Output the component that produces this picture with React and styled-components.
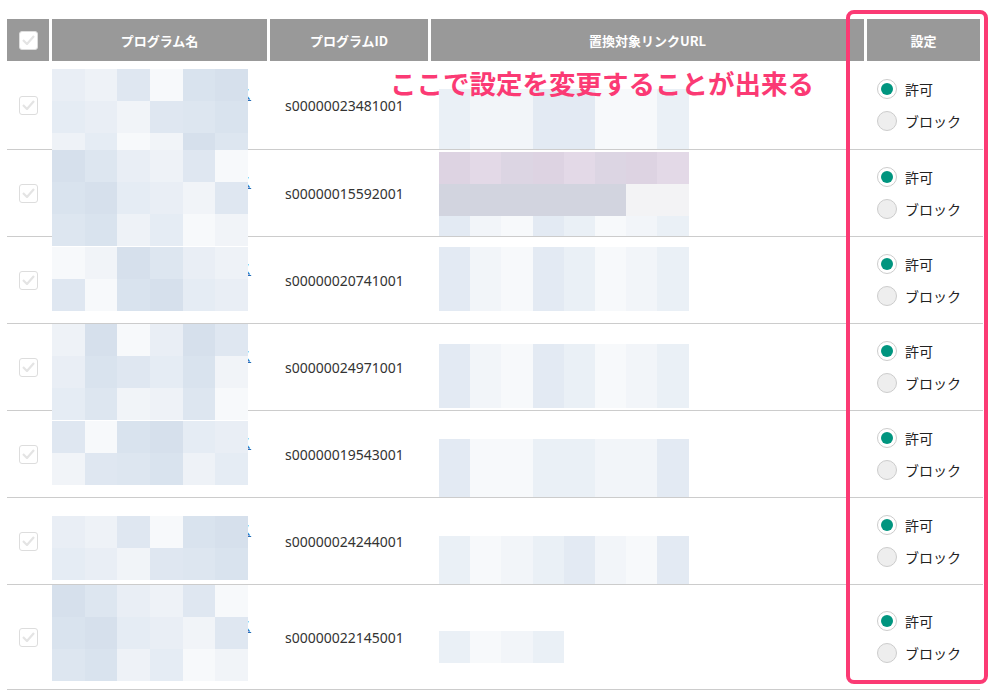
import React from "react";
import styled, { createGlobalStyle } from "styled-components";

const Global = createGlobalStyle`
  body { margin: 0; background: #fff; font-family: "Noto Sans CJK JP", "Noto Sans", sans-serif; }
`;

const Page = styled.div`
  position: relative;
  padding: 19px 0 0 7px;
  width: 1004px;
  height: 693px;
  box-sizing: border-box;
  overflow: hidden;
`;

const Grid = styled.div`
  display: grid;
  grid-template-columns: 42px 215px 158px 433px 113px;
  column-gap: 3px;
  width: 973px;
`;

const Head = styled.div`
  background: #999;
  height: 42px;
  display: flex;
  align-items: center;
  justify-content: center;
  color: #fff;
  font-weight: 700;
  font-size: 13px;
`;

const Cell = styled.div`
  position: relative;
  height: ${p => p.h}px;
  border-bottom: 1px solid #ccc;
  display: flex;
  align-items: center;
  justify-content: ${p => (p.center ? "center" : "flex-start")};
  padding-left: ${p => p.pl || 0}px;
  font-size: 14px;
  color: #333;
  font-family: "Noto Sans", "Noto Sans CJK JP", sans-serif;
  box-sizing: border-box;
  overflow: ${p => (p.clip ? "hidden" : "visible")};
  &:not(:last-child) { margin-right: -3px; padding-right: 3px; }
`;

const Box = styled.div`
  width: 19px;
  height: 19px;
  border: 1px solid #ddd;
  border-radius: 3px;
  background: #fff;
  box-sizing: border-box;
  display: flex;
  align-items: center;
  justify-content: center;
`;

const LinkText = styled.a`
  color: #2a6fb8;
  text-decoration: underline;
  font-size: 14px;
  line-height: 23px;
  padding-left: 18px;
  width: 192px;
  word-break: break-all;
`;

const Mosaic = styled.div`
  position: absolute;
  left: ${p => p.x}px;
  top: ${p => p.y}px;
  display: grid;
  grid-template-columns: repeat(${p => p.cols}, ${p => p.cw}px);
  grid-auto-rows: 32px;
`;

const Tile = styled.div``;

const Radios = styled.div`
  display: flex;
  flex-direction: column;
  gap: 12px;
  padding-left: 10px;
`;

const RadioRow = styled.label`
  display: flex;
  align-items: center;
  gap: 8px;
  font-size: 14px;
  color: #222;
  font-family: "Noto Sans CJK JP", sans-serif;
`;

const Circle = styled.span`
  width: 20px;
  height: 20px;
  border-radius: 50%;
  border: 1px solid #ccc;
  box-sizing: border-box;
  background: ${p => (p.on ? "#fff" : "#eee")};
  display: flex;
  align-items: center;
  justify-content: center;
  &::after {
    content: "";
    width: 12px;
    height: 12px;
    border-radius: 50%;
    background: ${p => (p.on ? "#00957f" : "transparent")};
  }
`;

const Frame = styled.div`
  position: absolute;
  left: 846px;
  top: 10px;
  width: 142px;
  height: 674px;
  border: 4px solid #fb3a74;
  border-radius: 8px;
  box-sizing: border-box;
  pointer-events: none;
`;

const Note = styled.div`
  position: absolute;
  left: 390px;
  top: 63px;
  color: #fb3a74;
  font-weight: 700;
  font-size: 26.5px;
  font-family: "Noto Sans CJK JP", sans-serif;
`;

const Check = () => (
  <svg width="13" height="10" viewBox="0 0 13 10">
    <path d="M1 5l4 4 7-8" fill="none" stroke="#e4e4e4" strokeWidth="2.2" />
  </svg>
);

const pal = ["#e9eef5", "#dfe7f1", "#d9e3ee", "#e5ecf4", "#f1f4f8", "#dde6f0", "#eef2f7", "#f7f9fb", "#d6e0ec"];
const upal = ["#eaf0f6", "#e6edf5", "#f2f5f9", "#fafbfc", "#e3eaf3", "#eef2f7", "#f7f9fb", "#fcfcfd"];
const tiles = (p, seed, n) => Array.from({ length: n }, (_, i) => p[(seed * 7 + i * 5 + ((i * i + seed) % 4)) % p.length]);

const rows = [
  { id: "s00000023481001", h: 89, ny: 8, nr: 3, uy: 28, ur: 2, uc: 8 },
  { id: "s00000015592001", h: 87, ny: 0, nr: 3, uy: 2, ur: 3, uc: 8, purple: true },
  { id: "s00000020741001", h: 87, ny: 10, nr: 2, uy: 10, ur: 2, uc: 8 },
  { id: "s00000024971001", h: 87, ny: 0, nr: 3, uy: 20, ur: 2, uc: 8 },
  { id: "s00000019543001", h: 87, ny: 10, nr: 2, uy: 28, ur: 2, uc: 8 },
  { id: "s00000024244001", h: 87, ny: 18, nr: 2, uy: 38, ur: 2, uc: 8 },
  { id: "s00000022145001", h: 105, ny: 0, nr: 3, uy: 46, ur: 1, uc: 4 },
];

export default function App() {
  return (
    <Page>
      <Global />
      <Grid>
        <Head><Box><Check /></Box></Head>
        <Head>プログラム名</Head>
        <Head>プログラムID</Head>
        <Head>置換対象リンクURL</Head>
        <Head>設定</Head>
        {rows.map((r, i) => (
          <React.Fragment key={i}>
            <Cell h={r.h} center><Box><Check /></Box></Cell>
            <Cell h={r.h}>
              <LinkText>プログラム名のリンクテキストがここに入りますのです</LinkText>
              <Mosaic x={0} y={r.ny} cols={6} cw={32.7}>
                {tiles(pal, i, 6 * r.nr).map((c, k) => <Tile key={k} style={{ background: c }} />)}
              </Mosaic>
            </Cell>
            <Cell h={r.h} pl={15}>{r.id}</Cell>
            <Cell h={r.h} clip>
              <Mosaic x={8} y={r.uy} cols={8} cw={31.2}>
                {tiles(upal, i + 3, 8 * r.ur).map((c, k) => (
                  <Tile key={k} style={{ background: (k % 8) >= r.uc ? "transparent" : r.purple && k < 8 ? ["#ddd3e2", "#e3d9e7", "#dcd5e3"][k % 3] : r.purple && k < 16 ? (k % 8 > 5 ? "#f3f3f5" : "#d2d4df") : c }} />
                ))}
              </Mosaic>
            </Cell>
            <Cell h={r.h}>
              <Radios>
                <RadioRow><Circle on />許可</RadioRow>
                <RadioRow><Circle />ブロック</RadioRow>
              </Radios>
            </Cell>
          </React.Fragment>
        ))}
      </Grid>
      <Note>ここで設定を変更することが出来る</Note>
      <Frame />
    </Page>
  );
}
